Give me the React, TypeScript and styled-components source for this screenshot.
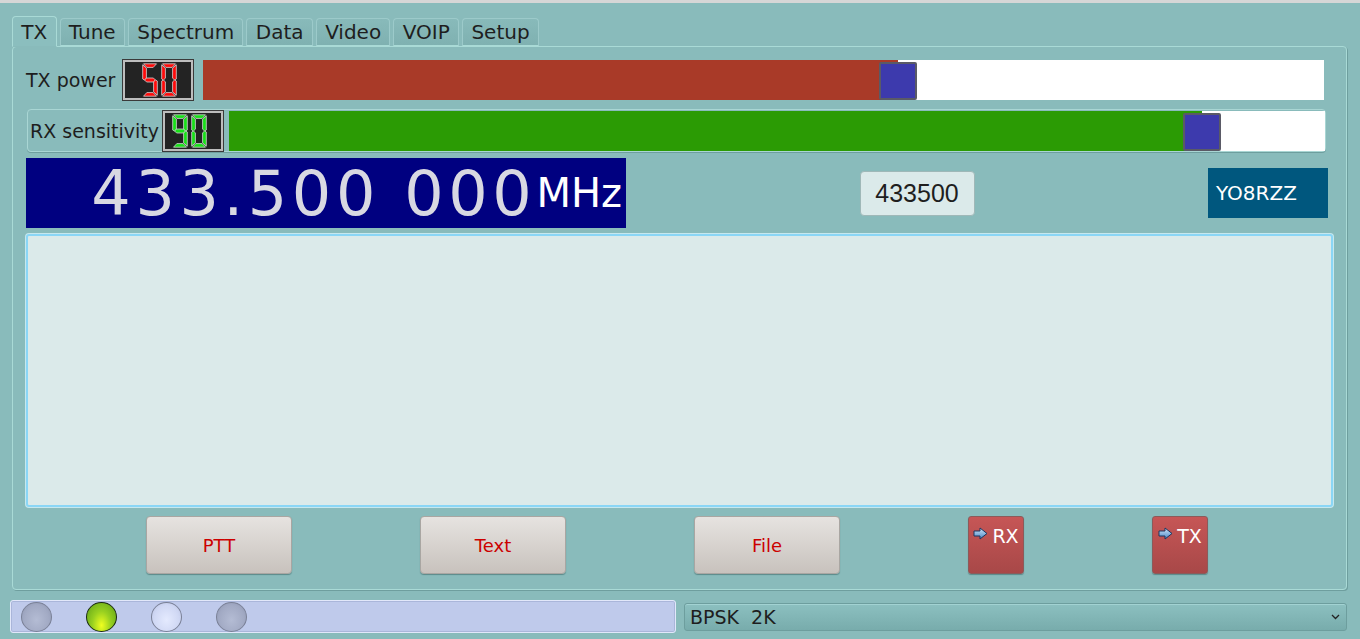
import React from 'react'
import styled, { createGlobalStyle } from 'styled-components'

const GlobalStyle = createGlobalStyle`
  html, body {
    margin: 0;
    padding: 0;
    background: #89bbbb;
    font-family: "DejaVu Sans", "Noto Sans", sans-serif;
    color: #1e1e1e;
    overflow: hidden;
  }
`

const Page = styled.div`
  width: 1360px;
  height: 639px;
  display: flex;
  flex-direction: column;
`

const TopStrip = styled.div`
  height: 3px;
  background: #d6d6d6;
`

const TabBar = styled.div`
  display: flex;
  align-items: flex-end;
  gap: 3px;
  margin: 13px 0 0 12px;
  position: relative;
  z-index: 1;
`

const Tab = styled.div<{ $active?: boolean }>`
  box-sizing: border-box;
  height: ${p => (p.$active ? '31px' : '28px')};
  padding: 0 8.3px;
  display: flex;
  align-items: center;
  font-size: 20px;
  border: 1px solid ${p => (p.$active ? '#a9dad6' : '#9ccaca')};
  border-bottom: ${p => (p.$active ? '1px solid #89bbbb' : '1px solid #a9dad6')};
  border-radius: 4px 4px 0 0;
  background: ${p => (p.$active
    ? '#8bbebe'
    : 'linear-gradient(#88baba, #7fb1b1)')};
  margin-bottom: ${p => (p.$active ? '-1px' : '0')};
`

const Panel = styled.div`
  margin: 0 13px 0 12px;
  height: 544px;
  box-sizing: border-box;
  border: 1px solid #a9dad6;
  border-radius: 4px;
  box-shadow: 1px 1px 0 #6e9e9e;
  padding: 13px 13px 0 13px;
  display: flex;
  flex-direction: column;
`

const SliderRow = styled.div`
  height: 40px;
  display: flex;
  align-items: center;
`

const RxBox = styled.div`
  height: 43px;
  margin: 9px 7px 0 1px;
  box-sizing: border-box;
  border: 1px solid #a9d6d4;
  border-radius: 4px;
  box-shadow: 0 1px 0 #6e9e9e;
  display: flex;
  align-items: center;
  padding-left: 2px;
`

const Label = styled.span`
  font-size: 19px;
  white-space: nowrap;
`

const Lcd = styled.div<{ $width: number; $ml: number }>`
  width: ${p => p.$width}px;
  height: 40px;
  box-sizing: border-box;
  background: #232323;
  border: 2px solid #bdbdbd;
  outline: 1px solid #3a3a3a;
  display: flex;
  align-items: center;
  justify-content: flex-end;
  gap: 3px;
  padding-right: 14px;
  margin-left: ${p => p.$ml}px;
`

const Track = styled.div<{ $ml: number; $mr: number }>`
  flex: 1;
  height: 40px;
  margin-left: ${p => p.$ml}px;
  margin-right: ${p => p.$mr}px;
  background: #ffffff;
  position: relative;
  display: flex;
`

const Fill = styled.div<{ $pct: number; $color: string }>`
  width: ${p => p.$pct}%;
  background: ${p => p.$color};
`

const Handle = styled.div<{ $pct: number }>`
  position: absolute;
  top: 2px;
  left: calc(${p => p.$pct}% - 19px);
  width: 34px;
  height: 34px;
  background: #3d3aad;
  border: 2px solid #5a5a66;
  border-radius: 2px;
`

const FreqRow = styled.div`
  height: 70px;
  margin-top: 6px;
  padding-right: 5px;
  display: flex;
  align-items: center;
  justify-content: space-between;
`

const FreqDisplay = styled.div`
  width: 600px;
  height: 70px;
  background: #000080;
  display: flex;
  align-items: center;
  justify-content: flex-end;
  padding-right: 4px;
  box-sizing: border-box;
`

const FreqDigits = styled.span`
  font-size: 62px;
  letter-spacing: 4.6px;
  color: #d8d8e2;
  white-space: pre;
`

const FreqUnit = styled.span`
  font-size: 40px;
  color: #ffffff;
`

const KhzBox = styled.div`
  width: 115px;
  height: 45px;
  box-sizing: border-box;
  background: #dbeaea;
  border: 1px solid #9fb8b8;
  border-radius: 4px;
  display: flex;
  align-items: center;
  justify-content: center;
  font-family: "Liberation Sans", sans-serif;
  font-size: 25px;
  color: #1e1e1e;
`

const CallSign = styled.div`
  width: 120px;
  height: 50px;
  box-sizing: border-box;
  background: #00577e;
  color: #ffffff;
  font-size: 20px;
  display: flex;
  align-items: center;
  padding-left: 8px;
`

const TextArea = styled.div`
  height: 273px;
  margin-top: 6px;
  box-sizing: border-box;
  background: #dbeaea;
  border: 2px solid #8ad6f6;
  border-radius: 3px;
  box-shadow: 0 0 0 1px #c6e8ee;
`

const ButtonRow = styled.div`
  height: 58px;
  margin-top: 9px;
  padding-left: 120px;
  display: flex;
  gap: 128px;
`

const PlainButton = styled.div`
  width: 146px;
  height: 58px;
  box-sizing: border-box;
  border: 1px solid #a9a6a2;
  border-radius: 4px;
  background: linear-gradient(#e6e3e0, #c8c2bd);
  box-shadow: 0 1px 1px #5c8a8a;
  display: flex;
  align-items: center;
  justify-content: center;
  font-size: 18px;
  color: #cc0000;
`

const SwitchButton = styled.div`
  width: 56px;
  height: 58px;
  box-sizing: border-box;
  border: 1px solid #8c5a5a;
  border-radius: 3px;
  background: linear-gradient(#c65656, #a84848);
  box-shadow: 0 1px 1px #5c8a8a;
  display: flex;
  align-items: flex-start;
  justify-content: center;
  gap: 4px;
  padding-top: 8px;
  font-size: 19px;
  color: #ffffff;
`

const Arrow = styled.svg`
  margin-top: 2px;
  flex: none;
`

const StatusRow = styled.div`
  display: flex;
  align-items: center;
  gap: 8px;
  margin: 10px 13px 0 10px;
`

const LedStrip = styled.div`
  width: 666px;
  height: 33px;
  box-sizing: border-box;
  background: #bfcaeb;
  border: 1px solid #e2e8fa;
  border-radius: 3px;
  box-shadow: inset 0 0 0 1px #aab6da;
  display: flex;
  align-items: center;
  gap: 34px;
  padding-left: 10px;
`

const Led = styled.div<{ $kind: 'off' | 'on' | 'light' }>`
  width: 31px;
  height: 30px;
  box-sizing: border-box;
  border-radius: 50%;
  border: 1px solid ${p => (p.$kind === 'on' ? '#1a2a10' : '#7a8096')};
  background: ${p =>
    p.$kind === 'on'
      ? 'radial-gradient(ellipse at 50% 80%, #f0ff20 0%, #98d020 45%, #5ca018 100%)'
      : p.$kind === 'light'
        ? 'radial-gradient(ellipse at 50% 60%, #e4eafe 0%, #d0d8f4 60%, #b8c0e0 100%)'
        : 'radial-gradient(ellipse at 50% 60%, #b4bcd4 0%, #a2aac4 60%, #8c94b0 100%)'};
`

const Combo = styled.div`
  flex: 1;
  height: 28px;
  box-sizing: border-box;
  border: 1px solid #6d9e9e;
  border-radius: 3px;
  background: linear-gradient(#8cc0c0, #78acac);
  box-shadow: inset 0 1px 0 #a2d2d2;
  display: flex;
  align-items: center;
  justify-content: space-between;
  padding: 0 6px 0 5px;
  font-size: 19px;
  white-space: pre;
`

const Chevron = styled.svg`
  flex: none;
`

type Seg = 'a' | 'b' | 'c' | 'd' | 'e' | 'f' | 'g'

const SEGMENTS: Record<Seg, string> = {
  a: 'M1.5,0.8 L14.5,0.8 L11.2,4.4 L4.8,4.4 Z',
  b: 'M15.3,1.8 L15.3,16 L13.6,17 L11.6,15.2 L11.6,5.2 Z',
  c: 'M15.3,18 L15.3,32.2 L11.6,28.8 L11.6,18.8 L13.6,17 Z',
  d: 'M1.5,33.2 L14.5,33.2 L11.2,29.6 L4.8,29.6 Z',
  e: 'M0.7,18 L2.4,17 L4.4,18.8 L4.4,28.8 L0.7,32.2 Z',
  f: 'M0.7,1.8 L4.4,5.2 L4.4,15.2 L2.4,17 L0.7,16 Z',
  g: 'M2.6,17 L4.6,15 L11.4,15 L13.4,17 L11.4,19 L4.6,19 Z',
}

const DIGITS: Record<string, Seg[]> = {
  '0': ['a', 'b', 'c', 'd', 'e', 'f'],
  '5': ['a', 'f', 'g', 'c', 'd'],
  '9': ['a', 'b', 'c', 'd', 'f', 'g'],
}

function SegDigit({ digit, color }: { digit: string; color: string }) {
  const lit = DIGITS[digit] || []
  return (
    <svg width="16" height="34" viewBox="0 0 16 34">
      {lit.map(s => (
        <path key={s} d={SEGMENTS[s]} fill={color} stroke="#d4d4d4" strokeWidth="0.8" />
      ))}
    </svg>
  )
}

function LcdNumber({ value, color, width, ml }: { value: string; color: string; width: number; ml: number }) {
  return (
    <Lcd $width={width} $ml={ml}>
      {value.split('').map((d, i) => (
        <SegDigit key={i} digit={d} color={color} />
      ))}
    </Lcd>
  )
}

function ArrowIcon() {
  return (
    <Arrow width="15" height="13" viewBox="0 0 15 13">
      <defs>
        <linearGradient id="arr" x1="0" y1="0" x2="0" y2="1">
          <stop offset="0" stopColor="#cfe6fa" />
          <stop offset="1" stopColor="#4a86c4" />
        </linearGradient>
      </defs>
      <path d="M1,4 H7 V1 L14,6.5 L7,12 V9 H1 Z" fill="url(#arr)" stroke="#1c3660" strokeWidth="1" strokeLinejoin="round" />
    </Arrow>
  )
}

const tabs = ['TX', 'Tune', 'Spectrum', 'Data', 'Video', 'VOIP', 'Setup']

export default function App() {
  const txPower = 62
  const rxSens = 88.8

  return (
    <>
      <GlobalStyle />
      <Page>
        <TopStrip />
        <TabBar>
          {tabs.map(t => (
            <Tab key={t} $active={t === 'TX'}>{t}</Tab>
          ))}
        </TabBar>
        <Panel>
          <SliderRow>
            <Label>TX power</Label>
            <LcdNumber value="50" color="#ff0a0a" width={70} ml={8} />
            <Track $ml={10} $mr={9}>
              <Fill $pct={txPower} $color="#a93a28" />
              <Handle $pct={txPower} />
            </Track>
          </SliderRow>
          <RxBox>
            <Label>RX sensitivity</Label>
            <LcdNumber value="90" color="#18e018" width={60} ml={4} />
            <Track $ml={6} $mr={0}>
              <Fill $pct={rxSens} $color="#2b9b04" />
              <Handle $pct={rxSens} />
            </Track>
          </RxBox>
          <FreqRow>
            <FreqDisplay>
              <FreqDigits>433.500 000</FreqDigits>
              <FreqUnit>MHz</FreqUnit>
            </FreqDisplay>
            <KhzBox>433500</KhzBox>
            <CallSign>YO8RZZ</CallSign>
          </FreqRow>
          <TextArea />
          <ButtonRow>
            <PlainButton>PTT</PlainButton>
            <PlainButton>Text</PlainButton>
            <PlainButton>File</PlainButton>
            <SwitchButton><ArrowIcon />RX</SwitchButton>
            <SwitchButton><ArrowIcon />TX</SwitchButton>
          </ButtonRow>
        </Panel>
        <StatusRow>
          <LedStrip>
            <Led $kind="off" />
            <Led $kind="on" />
            <Led $kind="light" />
            <Led $kind="off" />
          </LedStrip>
          <Combo>
            <span>BPSK  2K</span>
            <Chevron width="9" height="6" viewBox="0 0 9 6">
              <path d="M1,1 L4.5,4.5 L8,1" fill="none" stroke="#222" strokeWidth="1.3" />
            </Chevron>
          </Combo>
        </StatusRow>
      </Page>
    </>
  )
}
